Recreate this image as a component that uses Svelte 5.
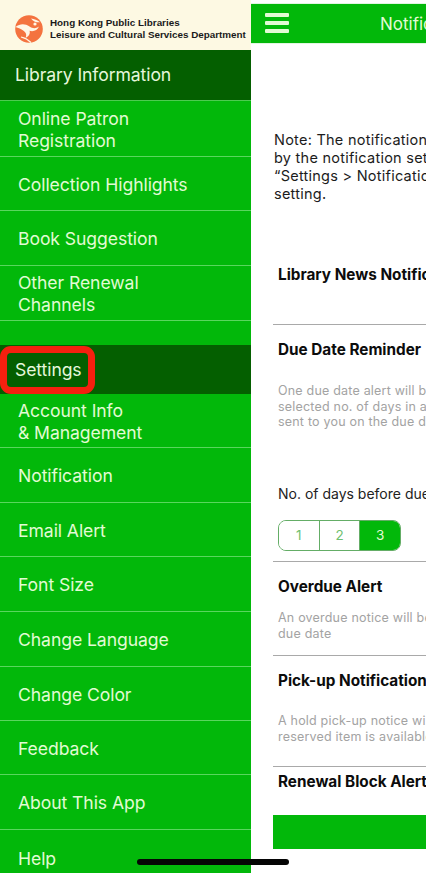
<script lang="ts">
  // Side drawer open over the notification settings page.
  const topMenu = [
    { label: ['Online Patron', 'Registration'], h: 56 },
    { label: ['Collection Highlights'], h: 54 },
    { label: ['Book Suggestion'], h: 55 },
    { label: ['Other Renewal', 'Channels'], h: 55 },
    { label: [], h: 24 },
  ];
  const settingsMenu = [
    { label: ['Account Info', '& Management'], h: 54 },
    { label: ['Notification'], h: 55 },
    { label: ['Email Alert'], h: 54 },
    { label: ['Font Size'], h: 55 },
    { label: ['Change Language'], h: 55 },
    { label: ['Change Color'], h: 54 },
    { label: ['Feedback'], h: 54 },
    { label: ['About This App'], h: 55 },
    { label: ['Help'], h: 55 },
  ];
  const days = [1, 2, 3];
  let selected = $state(3);
</script>

<div class="screen">
  <aside class="drawer">
    <header class="brand">
      <svg class="brand__logo" viewBox="0 0 28 28" width="28" height="28" aria-hidden="true">
        <circle cx="14" cy="14" r="13.800" fill="#f4733f" />
        <path d="M0.500 12C5 8.500 10 8.500 14.500 11.500c3 2 6 2.500 9.500 0-1.500 3.800-5.500 5.500-9.500 4.300 1 2.800-.5 5.700-4 7.200 1.500-3.200.5-5.500-2-7.300C6 14 3.500 12.800 0.500 12Z" fill="#fff6e6" />
        <path d="M16 3.500c3.200.8 6.500 1.200 9 3.800-3.500.4-6.800-.8-9-3.800Z" fill="#fff6e6" />
        <circle cx="20" cy="9" r="1.600" fill="#fff6e6" />
        <path d="M6 22c3.500.8 7 2.500 10 5.500" stroke="#fff6e6" stroke-width="1.200" fill="none" />
      </svg>
      <div class="brand__text">
        <div>Hong Kong Public Libraries</div>
        <div>Leisure and Cultural Services Department</div>
      </div>
    </header>

    <div class="section section--first">Library Information</div>
    <nav class="menu">
      {#each topMenu as item}
        <div class="menu__item" style="height:{item.h}px">
          <span>{#each item.label as line}<div>{line}</div>{/each}</span>
        </div>
      {/each}
    </nav>

    <div class="section">Settings</div>
    <nav class="menu">
      {#each settingsMenu as item}
        <div class="menu__item" style="height:{item.h}px">
          <span>{#each item.label as line}<div>{line}</div>{/each}</span>
        </div>
      {/each}
    </nav>
  </aside>

  <main class="page">
    <div class="topbar">
      <div class="burger"><i></i><i></i><i></i></div>
      <div class="topbar__title">Notification</div>
    </div>

    <p class="note">
      Note: The notification will be sent according to<br />
      by the notification settings of this device under<br />
      “Settings &gt; Notification” and the in-app<br />
      setting.
    </p>

    <div class="list">
      <section class="row row--news">
        <h3>Library News Notification</h3>
      </section>

      <section class="row row--due">
        <h3>Due Date Reminder</h3>
        <p class="hint">
          One due date alert will be sent to you at the<br />
          selected no. of days in advance and one will be<br />
          sent to you on the due date
        </p>
        <div class="days-label">No. of days before due date</div>
        <div class="segment">
          {#each days as d}
            <button type="button" class:on={selected === d} onclick={() => (selected = d)}>{d}</button>
          {/each}
        </div>
      </section>

      <section class="row row--overdue">
        <h3>Overdue Alert</h3>
        <p class="hint">
          An overdue notice will be sent to you after the<br />
          due date
        </p>
      </section>

      <section class="row row--pickup">
        <h3>Pick-up Notification</h3>
        <p class="hint">
          A hold pick-up notice will be sent to you when<br />
          reserved item is available
        </p>
      </section>

      <section class="row row--renewal">
        <h3>Renewal Block Alert</h3>
      </section>
    </div>

    <div class="save"></div>
  </main>

  <div class="highlight"></div>
  <div class="home-bar"></div>
</div>

<style>
  :global(body) {
    margin: 0;
    background: #fff;
  }
  .screen {
    position: relative;
    display: flex;
    width: 426px;
    height: 873px;
    overflow: hidden;
    font-family: Inter, "Noto Sans", "Liberation Sans", sans-serif;
  }

  .drawer {
    flex: 0 0 251px;
    width: 251px;
    background: #02b80a;
    color: #e2fbd4;
  }
  .brand {
    display: flex;
    align-items: center;
    height: 50px;
    padding: 8px 0 0 15px;
    box-sizing: border-box;
    background: #fdf9e3;
  }
  .brand__logo {
    flex: none;
    margin-right: 7px;
  }
  .brand__text {
    font-family: "Liberation Sans", Arial, sans-serif;
    font-size: 9.850px;
    font-weight: 700;
    line-height: 12px;
    color: #1a1a1a;
    white-space: nowrap;
  }
  .section {
    display: flex;
    align-items: center;
    height: 49px;
    padding-left: 15px;
    background: #045f00;
    font-size: 17.600px;
    letter-spacing: -0.1px;
    color: #e6f7dc;
  }
  .section--first {
    box-sizing: border-box;
    height: 51px;
    padding-bottom: 2px;
    border-bottom: 1px solid #4ccb50;
  }
  .menu__item {
    display: flex;
    align-items: center;
    padding: 2px 0 0 18px;
    box-sizing: border-box;
    border-bottom: 1px solid #5ad65e;
    font-size: 17.600px;
    line-height: 22px;
    letter-spacing: -0.08px;
  }
  .menu__item:last-child {
    border-bottom: 0;
  }

  .page {
    flex: 1;
    min-width: 0;
    overflow: hidden;
    background: #fff;
  }
  .topbar {
    display: flex;
    align-items: center;
    width: 340px;
    height: 39px;
    margin-top: 4px;
    background: #02b80a;
    box-shadow: 0 0 1px #4ccb50;
  }
  .burger {
    display: flex;
    flex-direction: column;
    gap: 4px;
    width: 24px;
    margin-left: 14px;
    margin-top: -2px;
  }
  .burger i {
    height: 4px;
    border-radius: 1px;
    background: #e2fbd4;
  }
  .topbar__title {
    margin-left: 91px;
    font-size: 17px;
    color: #e2fbd4;
    white-space: nowrap;
  }
  .note {
    margin: 88px 0 0 23px;
    font-size: 14.500px;
    line-height: 18px;
    letter-spacing: 0.25px;
    color: #1c1c1c;
    white-space: nowrap;
  }
  .list {
    height: 589px;
    margin-left: 22px;
    overflow: hidden;
  }
  .row {
    width: 340px;
    box-sizing: border-box;
    padding-left: 5px;
    border-bottom: 1px solid #a9a9a9;
  }
  .row h3 {
    margin: 0;
    font-size: 15.300px;
    line-height: 18px;
    font-weight: 700;
    color: #0c0c0c;
    white-space: nowrap;
  }
  .hint {
    margin: 0;
    font-size: 12.500px;
    line-height: 15.500px;
    letter-spacing: 0.2px;
    color: #a3a3a3;
    white-space: nowrap;
  }
  .row--news {
    height: 122px;
    padding-top: 63px;
  }
  .row--due {
    height: 237px;
    padding-top: 16px;
  }
  .row--due .hint {
    margin-top: 24px;
  }
  .days-label {
    margin-top: 55px;
    font-size: 14px;
    line-height: 18px;
    color: #222;
    white-space: nowrap;
  }
  .segment {
    display: flex;
    width: 123px;
    height: 31px;
    margin-top: 17px;
    box-sizing: border-box;
    border: 1px solid #64ad66;
    border-radius: 8px;
    overflow: hidden;
  }
  .segment button {
    flex: 1;
    padding: 0;
    border: 0;
    border-left: 1px solid #64ad66;
    background: #fff;
    color: #6fbf70;
    font-family: inherit;
    font-size: 13.500px;
  }
  .segment button:first-child {
    border-left: 0;
  }
  .segment button.on {
    background: #02b80a;
    color: #e2fbd4;
  }
  .row--overdue {
    height: 94px;
    padding-top: 16px;
  }
  .row--overdue .hint {
    margin-top: 14px;
  }
  .row--pickup {
    height: 111px;
    padding-top: 16px;
  }
  .row--pickup .hint {
    margin-top: 23px;
  }
  .row--renewal {
    border-bottom: 0;
    padding-top: 6px;
  }
  .save {
    width: 340px;
    height: 34px;
    margin-top: 23px;
    margin-left: 22px;
    background: #02b80a;
  }

  /* red annotation drawn on top of the screenshot */
  .highlight {
    position: absolute;
    left: 0;
    top: 346px;
    width: 95px;
    height: 48px;
    box-sizing: border-box;
    border: 7px solid #f5200f;
    border-radius: 11px;
  }
  .home-bar {
    position: absolute;
    left: 137px;
    top: 859px;
    width: 152px;
    height: 6px;
    border-radius: 3px;
    background: #050505;
  }
</style>
